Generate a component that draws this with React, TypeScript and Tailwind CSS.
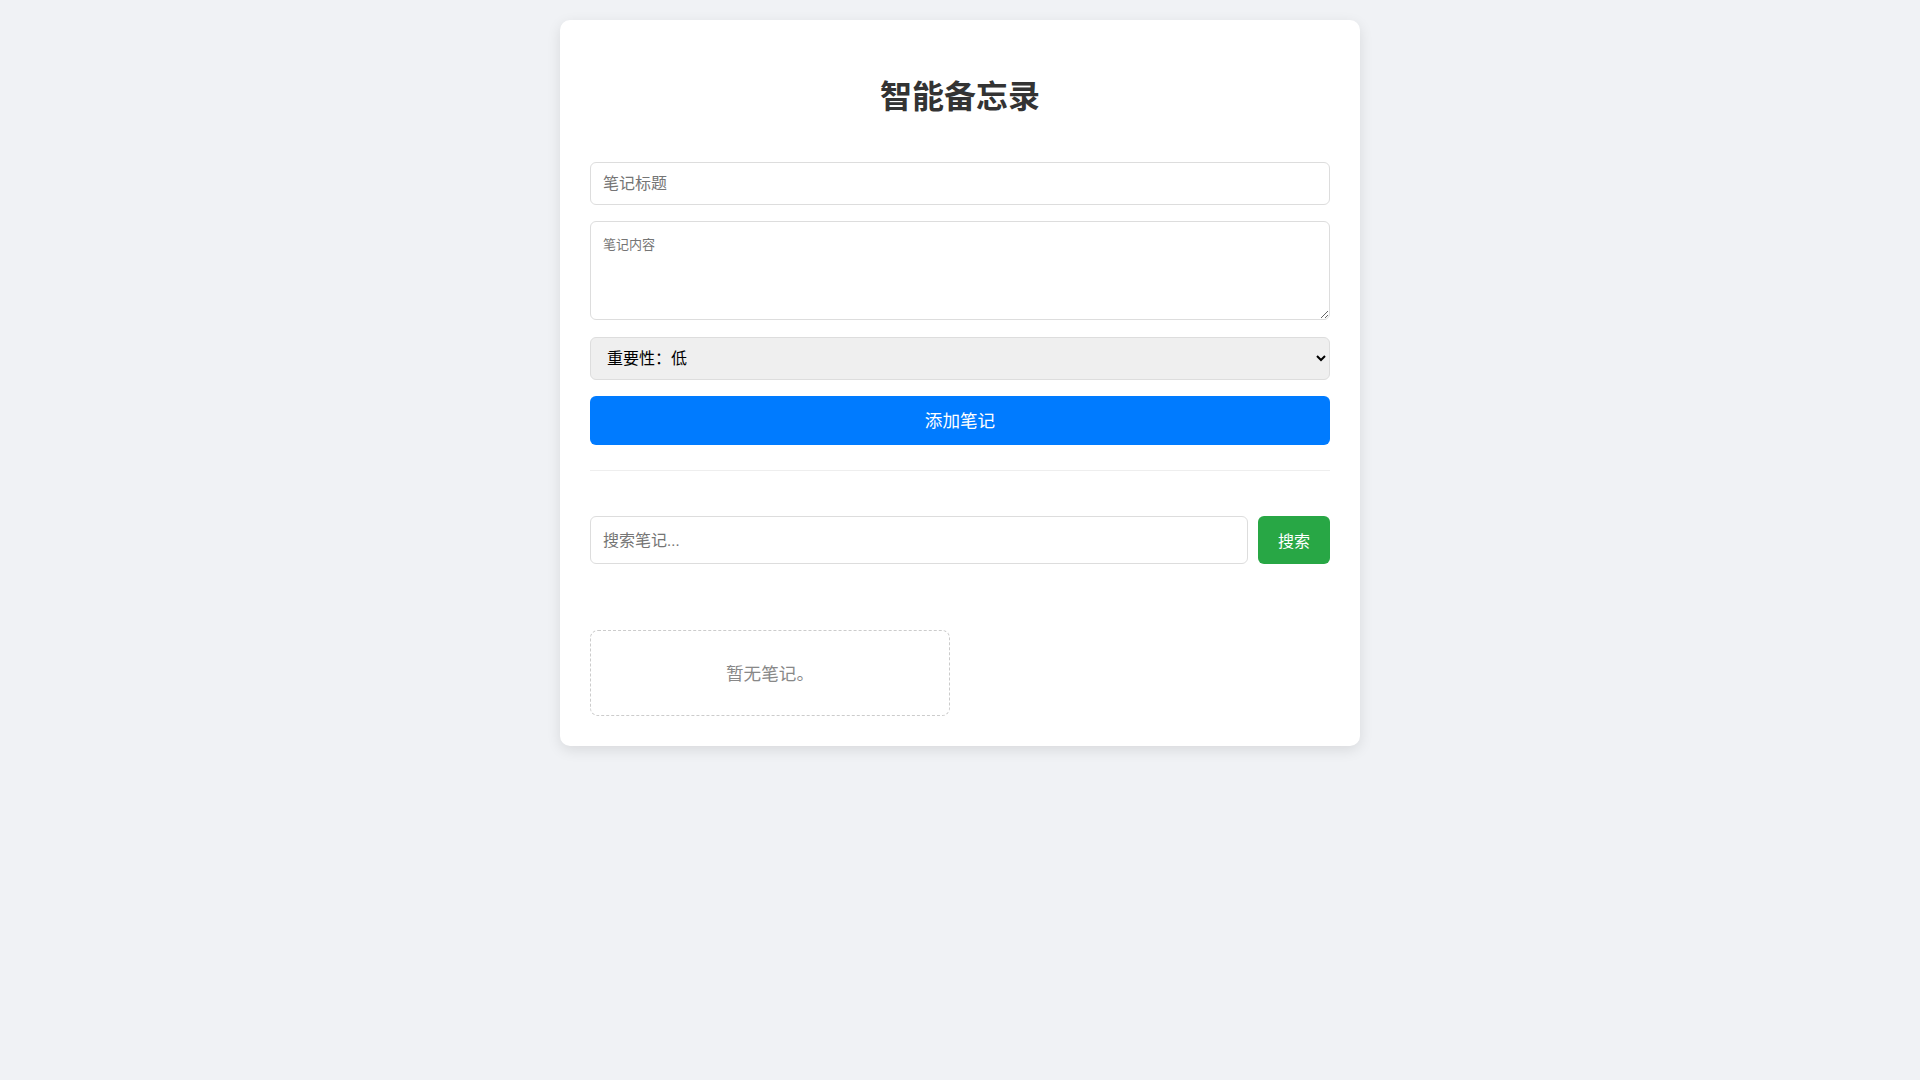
export default function App() {
  return (
    <div className="min-h-screen bg-[#f0f2f5] pt-5 font-['Noto_Sans_CJK_SC','Noto_Sans',sans-serif]">
      <div className="mx-auto w-[800px] rounded-[10px] bg-white p-[30px] shadow-[0_4px_14px_rgba(0,0,0,0.1)]">
        <h1 className="mt-[21px] mb-[45px] text-center text-[32px] font-bold leading-[46px] text-[#333]">
          智能备忘录
        </h1>
        <input
          type="text"
          placeholder="笔记标题"
          className="mb-[16px] block h-[43px] w-full rounded-[6px] border border-[#ddd] px-3 font-['Roboto','Noto_Sans_CJK_SC',sans-serif] text-base text-[#333] outline-none placeholder:text-[#757575]"
        />
        <textarea
          placeholder="笔记内容"
          className="mb-[17px] block h-[99px] w-full rounded-[6px] border border-[#ddd] px-3 py-[12px] text-[13px] text-[#333] outline-none placeholder:text-[#757575]"
        />
        <select className="mb-[16px] block h-[43px] w-full rounded-[6px] border border-[#ddd] bg-[#efefef] px-3 font-['Roboto','Noto_Sans_CJK_SC',sans-serif] text-base text-black outline-none">
          <option>重要性：低</option>
          <option>重要性：中</option>
          <option>重要性：高</option>
        </select>
        <button className="block h-[49px] w-full rounded-[6px] bg-[#007bff] text-[17.6px] text-white">
          添加笔记
        </button>
        <div className="mt-[25px] border-t border-[#eee]" />
        <div className="mt-[45px] flex gap-[10px]">
          <input
            type="text"
            placeholder="搜索笔记..."
            className="h-[48px] min-w-0 flex-1 rounded-[6px] border border-[#ddd] px-3 font-['Roboto','Noto_Sans_CJK_SC',sans-serif] text-base text-[#333] outline-none placeholder:text-[#757575]"
          />
          <button className="h-[48px] w-[72px] rounded-[6px] bg-[#28a745] text-base text-white">
            搜索
          </button>
        </div>
        <div className="mt-[66px] grid grid-cols-2 gap-5">
          <div className="flex h-[86px] items-center justify-center rounded-[8px] border border-dashed border-[#ccc] text-[17.6px] text-[#888]">
            暂无笔记。
          </div>
        </div>
      </div>
    </div>
  );
}
